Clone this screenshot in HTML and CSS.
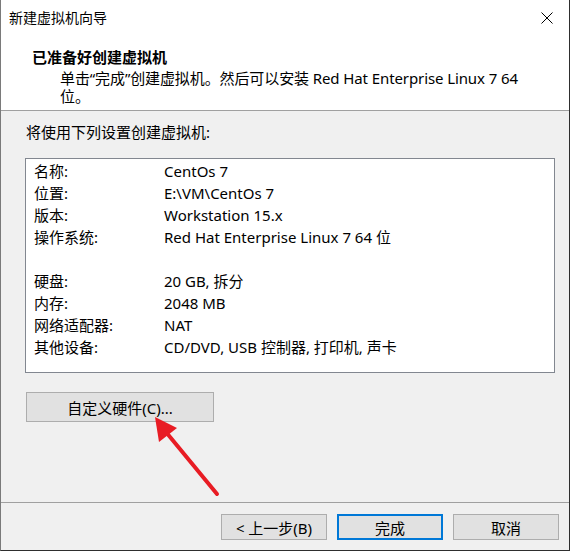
FILE: index.html
```html
<!DOCTYPE html>
<html lang="zh-CN">
<head>
<meta charset="utf-8">
<title>新建虚拟机向导</title>
<link rel="stylesheet" href="styles.css">
</head>
<body>
<div class="window">
  <div class="titlebar">
    <span class="title">新建虚拟机向导</span>
    <svg class="close" width="12" height="12" viewBox="0 0 12 12"><path d="M0.5 0.5 L11.5 11.5 M11.5 0.5 L0.5 11.5" stroke="#000" stroke-width="1" fill="none"/></svg>
  </div>
  <div class="header">
    <div class="h-title">已准备好创建虚拟机</div>
    <div class="h-sub">单击“完成”创建虚拟机。然后可以安装 Red Hat Enterprise Linux 7 64<br>位。</div>
  </div>
  <div class="content">
    <div class="intro">将使用下列设置创建虚拟机:</div>
    <div class="listbox">
      <div class="row"><span class="label">名称:</span><span class="value">CentOs 7</span></div>
      <div class="row"><span class="label">位置:</span><span class="value">E:\VM\CentOs 7</span></div>
      <div class="row"><span class="label">版本:</span><span class="value">Workstation 15.x</span></div>
      <div class="row"><span class="label">操作系统:</span><span class="value">Red Hat Enterprise Linux 7 64 位</span></div>
      <div class="row"></div>
      <div class="row"><span class="label">硬盘:</span><span class="value">20 GB, 拆分</span></div>
      <div class="row"><span class="label">内存:</span><span class="value">2048 MB</span></div>
      <div class="row"><span class="label">网络适配器:</span><span class="value">NAT</span></div>
      <div class="row"><span class="label">其他设备:</span><span class="value">CD/DVD, USB 控制器, 打印机, 声卡</span></div>
    </div>
    <button class="btn custom">自定义硬件(C)...</button>
  </div>
  <div class="footer">
    <button class="btn">&lt; 上一步(B)</button>
    <button class="btn primary">完成</button>
    <button class="btn">取消</button>
  </div>
  <svg class="arrow" width="80" height="90" viewBox="0 0 80 90">
    <line x1="70" y1="80" x2="14" y2="12" stroke="#e81c24" stroke-width="4" stroke-linecap="round"/>
    <polygon points="8,3 30,14 12,28" fill="#e81c24"/>
  </svg>
</div>
</body>
</html>
```
FILE: styles.css
```css
* { box-sizing: border-box; }
html, body { margin: 0; padding: 0; background: #f0f0f0; }
body {
  font-family: "Noto Sans", "Noto Sans CJK SC", sans-serif;
  font-size: 15px;
  color: #000;
}
.window {
  position: relative;
  width: 570px;
  height: 551px;
  display: flex;
  flex-direction: column;
  background: #f0f0f0;
  border-left: 1px solid #7a7a7a;
  border-right: 1px solid #2e2e2e;
  border-bottom: 1px solid #2e2e2e;
}
.titlebar {
  height: 36px;
  background: #fff;
  display: flex;
  align-items: center;
  justify-content: space-between;
  padding: 0 16px 0 8px;
}
.title { font-size: 14px; line-height: 20px; }
.header {
  height: 75px;
  background: #fff;
  border-bottom: 1px solid #a0a0a0;
  padding: 11px 0 0 31px;
}
.h-title { font-weight: bold; line-height: 20px; }
.h-sub { padding-left: 28px; line-height: 18px; margin-top: 2px; letter-spacing: -0.1px; }
.content { padding: 11px 0 0 24px; }
.intro { line-height: 20px; padding-left: 1px; }
.listbox {
  margin-top: 16px;
  width: 530px;
  height: 215px;
  background: #fff;
  border: 1px solid #828790;
  padding: 1px 0 0 8px;
}
.row { display: flex; height: 22px; line-height: 22px; }
.label { width: 130px; }
.btn {
  font-family: inherit;
  font-size: 15px;
  color: #000;
  background: #e1e1e1;
  border: 1px solid #adadad;
  padding: 0;
  margin: 0;
  height: 26px;
  width: 106px;
}
.custom {
  margin: 19px 0 0 1px;
  width: 188px;
  height: 30px;
}
.footer {
  margin-top: auto;
  border-top: 1px solid #a0a0a0;
  padding: 11px 10px 10px 0;
  display: flex;
  justify-content: flex-end;
  gap: 10px;
}
.primary { border: 2px solid #0078d7; }
.arrow { position: absolute; left: 146px; top: 414px; }
```
